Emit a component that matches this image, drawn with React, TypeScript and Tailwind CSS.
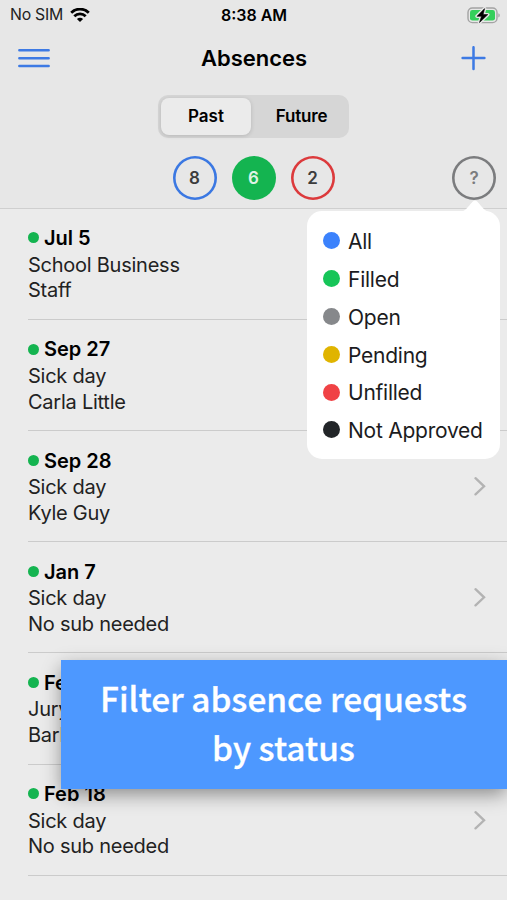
import clsx from 'clsx';

type Absence = {
  date: string;
  reason: string;
  person: string;
};

type Status = {
  label: string;
  dot: string;
};

const absences: Absence[] = [
  { date: 'Jul 5', reason: 'School Business', person: 'Staff' },
  { date: 'Sep 27', reason: 'Sick day', person: 'Carla Little' },
  { date: 'Sep 28', reason: 'Sick day', person: 'Kyle Guy' },
  { date: 'Jan 7', reason: 'Sick day', person: 'No sub needed' },
  { date: 'Feb', reason: 'Jury', person: 'Barb' },
  { date: 'Feb 18', reason: 'Sick day', person: 'No sub needed' },
];

const statuses: Status[] = [
  { label: 'All', dot: 'bg-[#3b82fc]' },
  { label: 'Filled', dot: 'bg-[#16c558]' },
  { label: 'Open', dot: 'bg-[#86888b]' },
  { label: 'Pending', dot: 'bg-[#e0b400]' },
  { label: 'Unfilled', dot: 'bg-[#f04245]' },
  { label: 'Not Approved', dot: 'bg-[#222528]' },
];

const WifiIcon = () => (
  <svg width="20" height="15" viewBox="0 0 20 15" fill="none" stroke="#000" strokeWidth="2.7">
    <path d="M1.2 4.8C6-.2 14-.2 18.8 4.8" />
    <path d="M4.3 8.3c3.1-3.2 8.3-3.2 11.4 0" />
    <path d="M10 14 6.9 10.9c1.7-1.6 4.5-1.6 6.2 0Z" fill="#000" stroke="none" />
  </svg>
);

const BatteryIcon = () => (
  <svg width="34" height="18" viewBox="0 0 34 18" fill="none">
    <rect x="1" y="1" width="29" height="14.6" rx="4.4" stroke="#a3a3a3" strokeWidth="1.4" />
    <rect x="3" y="3" width="25" height="10.6" rx="2.4" fill="#35cf5b" />
    <path d="M31.4 6.3c1.8.6 1.8 3.6 0 4.2Z" fill="#a3a3a3" />
    <path
      d="M17.6 1.6 10 9.3h4.5l-2 6.2L20.8 7.6h-4.7Z"
      fill="#000"
      stroke="#e7e7e7"
      strokeWidth="3.4"
      strokeLinejoin="round"
    />
    <path d="M17.6 1.6 10 9.3h4.5l-2 6.2L20.8 7.6h-4.7Z" fill="#000" stroke="#000" strokeWidth=".6" />
  </svg>
);

const StatusBar = () => (
  <div className="grid h-[30px] grid-cols-3 items-center pr-[6px] pl-[10px]">
    <div className="flex items-center gap-[7px]">
      <span className="text-[15.8px] tracking-[-0.25px] text-[#222]">No SIM</span>
      <WifiIcon />
    </div>
    <span className="-ml-[3px] text-center text-[16px] font-semibold whitespace-nowrap">8:38 AM</span>
    <div className="flex justify-end pt-px">
      <BatteryIcon />
    </div>
  </div>
);

const NavBar = () => (
  <div className="flex h-[56px] items-center justify-between pr-[21px] pl-[18px]">
    <svg width="32" height="20" viewBox="0 0 32 20" stroke="#3d7ae4" strokeWidth="2.6" strokeLinecap="round">
      <path d="M1.4 2.3h29.2M1.4 10.2h29.2M1.4 18h29.2" />
    </svg>
    <h1 className="-ml-[3px] text-[22px] font-semibold">Absences</h1>
    <svg width="25" height="25" viewBox="0 0 25 25" stroke="#3d7ae4" strokeWidth="2.5" strokeLinecap="round">
      <path d="M12.5 1.2v21.8M1.6 12.1h21.8" />
    </svg>
  </div>
);

const SegmentedControl = () => (
  <div className="mx-auto mt-[9px] flex h-[43px] w-[191px] rounded-[10px] bg-[#d6d6d6] p-[3px] text-[17px] font-semibold">
    <div className="flex w-[90px] items-center justify-center rounded-[8px] bg-[#ebebeb] shadow-[0_1px_4px_rgba(0,0,0,0.15)]">
      Past
    </div>
    <div className="flex flex-1 items-center justify-center pl-[6px] tracking-[-0.2px]">Future</div>
  </div>
);

const CountCircle = ({ value, className }: { value: string; className: string }) => (
  <div
    className={clsx(
      'flex size-[44px] items-center justify-center rounded-full pt-[2px] text-[17px] font-semibold',
      className,
    )}
  >
    {value}
  </div>
);

const StatusPopover = () => (
  <div className="absolute top-[43px] right-[-4px] z-10 w-[193px]">
    <svg className="absolute top-px left-[154px]" width="28" height="12" viewBox="0 0 28 12" fill="#fff">
      <path d="M0 12C5 11 9 4 11.8 1.5Q14-.5 16.2 1.5C19 4 23 11 28 12Z" />
    </svg>
    <ul className="mt-[12px] h-[248px] rounded-[15px] bg-white pt-[11.5px] pl-[16px]">
      {statuses.map(({ label, dot }) => (
        <li key={label} className="flex h-[37.8px] items-center gap-[8px]">
          <span className={clsx('size-[17px] shrink-0 rounded-full', dot)} />
          <span className="pt-[2px] text-[21px] tracking-[-0.25px] whitespace-nowrap text-[#1c1c1e]">{label}</span>
        </li>
      ))}
    </ul>
  </div>
);

const FilterRow = () => (
  <div className="mt-[17.5px] grid grid-cols-[1fr_auto_1fr] px-[11px]">
    <div />
    <div className="flex gap-[15px]">
      <CountCircle value="8" className="text-[#3c3c3c] shadow-[inset_0_0_0_2.6px_#3b78e2]" />
      <CountCircle value="6" className="bg-[#14b450] text-[#dff3e5]" />
      <CountCircle value="2" className="text-[#3c3c3c] shadow-[inset_0_0_0_2.6px_#dc3a3c]" />
    </div>
    <div className="relative flex justify-end">
      <CountCircle value="?" className="text-[#7b7c7e] shadow-[inset_0_0_0_2.6px_#7b7c7e]" />
      <StatusPopover />
    </div>
  </div>
);

const AbsenceRow = ({ date, reason, person }: Absence) => (
  <li className="ml-[28px] flex h-[111.2px] items-center justify-between border-b border-[#cbcbcb] pr-[21px]">
    <div className="pt-[2.5px] text-[20px] leading-[25.6px] tracking-[-0.25px] text-[#222]">
      <div className="mb-[1px] flex items-center gap-[5px] font-semibold tracking-normal text-black">
        <span className="-mt-0.5 size-[11px] rounded-full bg-[#14b450]" />
        {date}
      </div>
      <div>{reason}</div>
      <div>{person}</div>
    </div>
    <svg width="12" height="20" viewBox="0 0 12 20" fill="none" stroke="#b3b3b3" strokeWidth="2.3">
      <path d="m1.5 2.2 8.6 8.1-8.6 8.1" strokeLinecap="round" />
    </svg>
  </li>
);

const Banner = () => (
  <div className="absolute top-[660.4px] left-[61px] flex h-[129px] w-[446px] items-center justify-center bg-[#4d98ff] pr-px pb-[5px] text-center font-['Noto_Sans_CJK_SC',sans-serif] text-[33.4px] leading-[49px] font-medium text-white shadow-[0_6px_18px_-1px_rgba(0,0,0,0.42)] [-webkit-text-stroke:0.3px_white]">
    <p>
      Filter absence requests
      <br />
      by status
    </p>
  </div>
);

export default function App() {
  return (
    <main className="relative h-[900px] w-[507px] overflow-hidden bg-[#ebebeb] font-['Inter',sans-serif] text-black">
      <header className="h-[208.7px] border-b border-[#cfcfcf] bg-[#e7e7e7]">
        <StatusBar />
        <NavBar />
        <SegmentedControl />
        <FilterRow />
      </header>
      <ul>
        {absences.map((absence) => (
          <AbsenceRow key={absence.date} {...absence} />
        ))}
      </ul>
      <Banner />
    </main>
  );
}
